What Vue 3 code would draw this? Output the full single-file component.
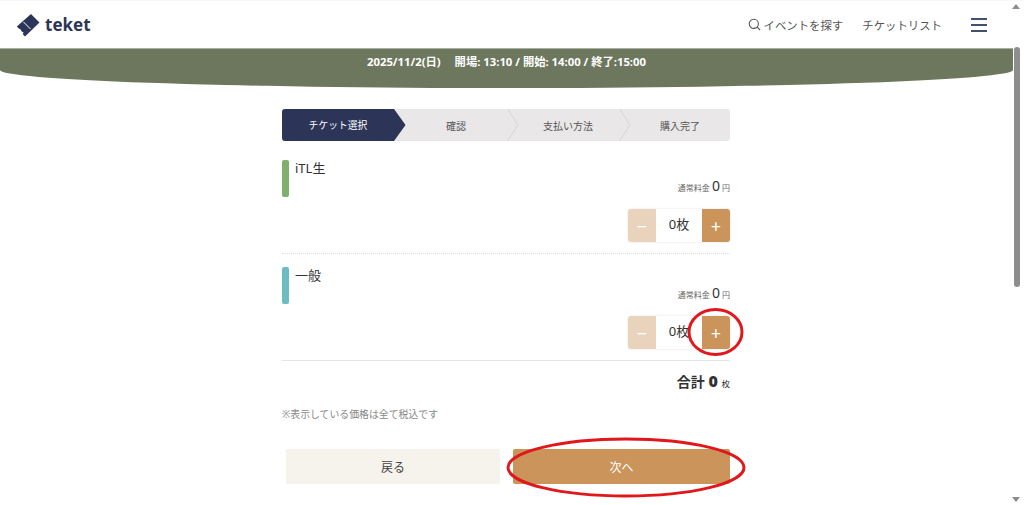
<template>
  <div class="page">
    <header class="top">
      <div class="logo">
        <svg class="logo-mark" width="24" height="24" viewBox="0 0 24 24">
          <path d="M15 1 L23.5 9.5 L9 23.5 L6.8 21.3 L7.6 19.2 L5.6 18.4 L4.8 16.4 L2.8 15.6 L0.8 13.5 Z" fill="#2c3557" />
          <path d="M7.5 9 L14.5 16" stroke="#fff" stroke-width="1" />
        </svg>
        <span class="logo-text">teket</span>
      </div>
      <nav class="nav">
        <a class="nav-link">
          <svg width="13" height="13" viewBox="0 0 13 13" fill="none" stroke="#555" stroke-width="1.1">
            <circle cx="5.8" cy="5.8" r="4.6" />
            <path d="M9.2 9.2 L12 12" />
          </svg>
          イベントを探す
        </a>
        <a class="nav-link">チケットリスト</a>
        <div class="burger"><i></i><i></i><i></i></div>
      </nav>
    </header>

    <div class="banner">
      <span>2025/11/2(日)</span>
      <span>開場: 13:10 / 開始: 14:00 / 終了:15:00</span>
    </div>

    <main class="content">
      <ol class="steps">
        <li v-for="(s, i) in steps" :key="s" :class="['step', { active: i === 0 }]">
          {{ s }}
          <svg v-if="i < 3" class="chevron" width="12" height="32" viewBox="0 0 12 32">
            <path v-if="i === 0" d="M0 0 L11.5 16 L0 32 Z" fill="#2c3557" />
            <path v-else d="M0.5 0 L11 16 L0.5 32" fill="none" stroke="#d6d4d5" />
          </svg>
        </li>
      </ol>

      <section v-for="t in tickets" :key="t.name" class="ticket">
        <div class="ticket-head">
          <span class="ticket-bar" :style="{ background: t.color }"></span>
          <span class="ticket-name">{{ t.name }}</span>
        </div>
        <div class="price">通常料金 <b>0</b> 円</div>
        <div class="stepper">
          <button class="minus">−</button>
          <span class="count">0枚</span>
          <button class="plus">+</button>
        </div>
      </section>

      <div class="total">合計 <b>0</b> <small>枚</small></div>
      <p class="note">※表示している価格は全て税込です</p>

      <div class="actions">
        <button class="back">戻る</button>
        <button class="next">次へ</button>
      </div>
    </main>

    <svg class="marks" width="1024" height="505" viewBox="0 0 1024 505" fill="none" stroke="#e0181c" stroke-width="3">
      <ellipse cx="715.5" cy="332" rx="26.5" ry="22.5" />
      <ellipse cx="626" cy="467.5" rx="118" ry="28.5" />
    </svg>

    <div class="scrollbar">
      <span class="arrow up"></span>
      <span class="thumb"></span>
      <span class="arrow down"></span>
    </div>
  </div>
</template>

<script setup>
const steps = ['チケット選択', '確認', '支払い方法', '購入完了']
const tickets = [
  { name: 'iTL生', color: '#7fae6d' },
  { name: '一般', color: '#6cbcc4' }
]
</script>

<style>
html, body { margin: 0; overflow: hidden; background: #fff; }
</style>

<style scoped>
.page {
  position: relative;
  width: 1024px;
  height: 505px;
  overflow: hidden;
  font-family: "Noto Sans", "Noto Sans CJK JP", sans-serif;
  color: #333;
  background: #fff;
  border-top: 1px solid #f3f8fc;
  box-sizing: border-box;
}

.top {
  height: 47px;
  width: 1013px;
  display: flex;
  align-items: center;
  justify-content: space-between;
  box-sizing: border-box;
  padding: 0 26px 0 16px;
}
.logo { display: flex; align-items: center; gap: 5px; }
.logo-mark { display: block; }
.logo-text {
  font-size: 17px;
  font-weight: 700;
  color: #2c3557;
}
.nav { display: flex; align-items: center; gap: 19px; }
.nav-link {
  display: flex;
  align-items: center;
  gap: 3px;
  font-size: 11.4px;
  color: #555;
}
.burger { display: flex; flex-direction: column; gap: 4px; width: 16px; margin-left: 10px; }
.burger i { display: block; height: 2px; background: #474f6e; }

.banner {
  position: relative;
  width: 1013px;
  height: 40px;
  box-sizing: border-box;
  padding-top: 4px;
  display: flex;
  justify-content: center;
  gap: 14px;
  background: #6d775e;
  border-top: 1px solid #a9aea0;
  border-radius: 0 0 50% 50% / 0 0 18px 18px;
  color: #fff;
  font-size: 11.3px;
  font-weight: 700;
  line-height: 17px;
}
.banner::after {
  content: '';
  position: absolute;
  z-index: -1;
  left: 445px;
  bottom: -1px;
  width: 115px;
  height: 6px;
  border-radius: 50%;
  background: #d9c45a;
}

.content {
  width: 448px;
  margin: 21px 0 0 282px;
}

.steps {
  display: flex;
  margin: 0;
  padding: 0;
  list-style: none;
  height: 32px;
  border-radius: 3px;
  background: #e9e7e8;
}
.step {
  position: relative;
  flex: 1;
  min-width: 0;
  display: flex;
  align-items: center;
  justify-content: center;
  font-size: 10px;
  color: #555;
  padding-left: 12px;
}
.chevron {
  position: absolute;
  top: 0;
  right: -13px;
  z-index: 1;
}
.step.active {
  background: #2c3557;
  color: #fff;
  flex: 0 0 112px;
  padding-left: 0;
  font-size: 9.8px;
  border-radius: 3px 0 0 3px;
}
.step.active .chevron { right: -12px; }

.ticket {
  height: 101px;
  margin-top: 12px;
  box-sizing: border-box;
  padding-top: 7px;
  border-bottom: 1px dotted #ddd;
  display: flex;
  flex-direction: column;
  align-items: flex-end;
}
.ticket + .ticket {
  height: 107px;
  margin-top: 0;
  padding-top: 13px;
  border-bottom: 1px solid #e4e4e4;
}
.ticket-head {
  align-self: stretch;
  display: flex;
  gap: 6px;
  height: 18px;
}
.ticket-bar {
  width: 7px;
  height: 37px;
  border-radius: 2px;
  flex: none;
}
.ticket-name {
  font-size: 13px;
  line-height: 17px;
  color: #333;
}
.price {
  font-size: 8px;
  line-height: 16px;
  margin-top: 0;
  color: #666;
}
.price b { font-size: 14px; font-weight: 400; color: #333; }

.stepper {
  display: flex;
  align-items: stretch;
  height: 33px;
  width: 102px;
  margin-top: 13px;
  border-radius: 3px;
  box-shadow: 0 0 2px rgba(0, 0, 0, 0.15);
  overflow: hidden;
  background: #fff;
}
.stepper button {
  width: 28px;
  padding: 0;
  border: 0;
  color: #fff;
  font-size: 18px;
  font-family: inherit;
}
.minus { background: #ead3bc; }
.plus { background: #cb945b; }
.count {
  flex: 1;
  text-align: center;
  font-size: 13px;
  line-height: 30px;
  color: #333;
}

.total {
  height: 20px;
  margin-top: 10px;
  text-align: right;
  font-size: 14px;
  font-weight: 700;
  line-height: 20px;
  color: #333;
}
.total b { font-size: 16px; line-height: 20px; }
.total small { font-size: 8.5px; font-weight: 400; }
.note {
  margin: 16px 0 0;
  font-size: 9.9px;
  line-height: 14px;
  color: #888;
}
.actions {
  display: flex;
  gap: 13px;
  margin: 28px 0 0 4px;
}
.actions button {
  height: 35px;
  padding: 0;
  border: 0;
  border-radius: 2px;
  font-family: inherit;
  font-size: 12px;
}
.back { width: 214px; background: #f6f2ec; color: #444; }
.next { width: 217px; background: #cb945b; color: #fff; }

.marks { position: absolute; left: 0; top: -1px; pointer-events: none; }

.scrollbar {
  position: absolute;
  top: 0;
  right: 0;
  width: 17px;
  height: 504px;
}
.thumb {
  position: absolute;
  top: 46px;
  left: 7px;
  width: 6px;
  height: 240px;
  border-radius: 3px;
  background: #8d8d8d;
}
.arrow { position: absolute; left: 5px; width: 0; height: 0; border-left: 4px solid transparent; border-right: 4px solid transparent; }
.arrow.up { top: 3px; border-bottom: 5px solid #8d8d8d; }
.arrow.down { bottom: 3px; border-top: 5px solid #8d8d8d; }
</style>
